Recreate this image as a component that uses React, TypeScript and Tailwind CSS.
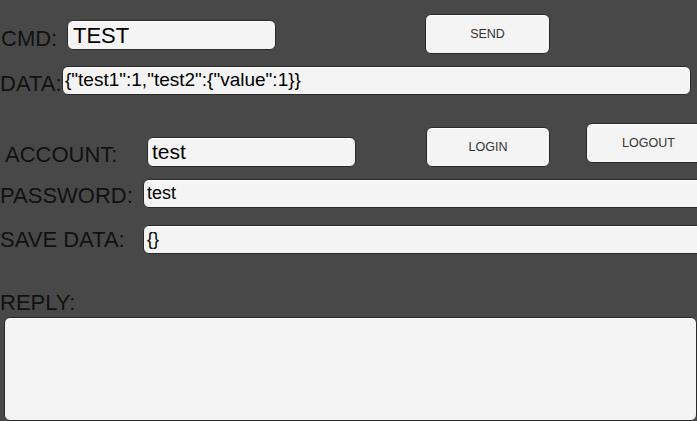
const box = "flex shrink-0 items-center rounded-[6px] border border-[#2a2a2a] bg-[#f4f4f4] shadow-[inset_0_1px_0_#ffffff] text-black";
const btn = "flex shrink-0 items-center justify-center rounded-[6px] border border-[#2a2a2a] bg-[#f4f4f4] shadow-[inset_0_1px_0_#ffffff] text-[12.5px] text-[#333]";
const label = "shrink-0 text-[22px] leading-[26px] text-[#111] whitespace-nowrap";

export default function App() {
  return (
    <div
      className="h-[421px] w-[697px] overflow-hidden bg-[#484848]"
      style={{ fontFamily: '"Liberation Sans", Arial, sans-serif' }}
    >
      {/* command row */}
      <div className="flex h-[66px] items-start">
        <div className={`${label} mt-[26px] w-[67px] pl-[1px]`}>CMD:</div>
        <div className={`${box} mt-[20px] h-[30px] w-[209px] pl-[5px] text-[22px]`}>TEST</div>
        <button className={`${btn} ml-[149px] mt-[14px] h-[40px] w-[125px]`}>SEND</button>
      </div>

      <div className="flex h-[57px] items-start">
        <div className={`${label} mt-[5px] w-[62px] text-[20.5px]`}>DATA:</div>
        <div className={`${box} h-[29px] w-[629px] pl-[2px] text-[19px]`}>
          {'{"test1":1,"test2":{"value":1}}'}
        </div>
      </div>

      {/* account row */}
      <div className="flex h-[56px] items-start">
        <div className={`${label} mt-[19px] w-[147px] pl-[5px]`}>ACCOUNT:</div>
        <div className={`${box} mt-[14px] h-[30px] w-[209px] pl-[4px] text-[21px]`}>test</div>
        <button className={`${btn} ml-[70px] mt-[4px] h-[40px] w-[124px]`}>LOGIN</button>
        <button className={`${btn} ml-[36px] h-[40px] w-[125px]`}>LOGOUT</button>
      </div>

      <div className="flex h-[46px] items-start">
        <div className={`${label} mt-[4px] w-[143px]`}>PASSWORD:</div>
        <div className={`${box} h-[29px] w-[570px] pl-[3px] text-[18px]`}>test</div>
      </div>

      <div className="flex h-[65px] items-start">
        <div className={`${label} mt-[2px] w-[143px]`}>SAVE DATA:</div>
        <div className={`${box} h-[29px] w-[570px] pl-[3px] text-[18px]`}>{"{}"}</div>
      </div>

      <div className={`${label} h-[27px]`}>REPLY:</div>
      <div className="ml-[4px] h-[104px] w-[693px] rounded-[6px] border border-[#2a2a2a] bg-[#f4f4f4] shadow-[inset_0_1px_0_#ffffff]" />
    </div>
  );
}
